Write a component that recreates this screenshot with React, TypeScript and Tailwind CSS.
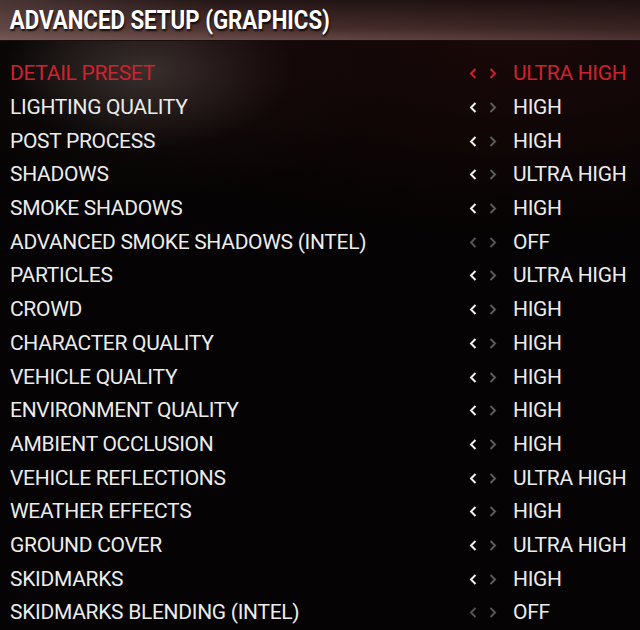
import React from 'react'

type Row = {
  label: string
  value: string
  active?: boolean
  disabled?: boolean
}

const rows: Row[] = [
  { label: 'DETAIL PRESET', value: 'ULTRA HIGH', active: true },
  { label: 'LIGHTING QUALITY', value: 'HIGH' },
  { label: 'POST PROCESS', value: 'HIGH' },
  { label: 'SHADOWS', value: 'ULTRA HIGH' },
  { label: 'SMOKE SHADOWS', value: 'HIGH' },
  { label: 'ADVANCED SMOKE SHADOWS (INTEL)', value: 'OFF', disabled: true },
  { label: 'PARTICLES', value: 'ULTRA HIGH' },
  { label: 'CROWD', value: 'HIGH' },
  { label: 'CHARACTER QUALITY', value: 'HIGH' },
  { label: 'VEHICLE QUALITY', value: 'HIGH' },
  { label: 'ENVIRONMENT QUALITY', value: 'HIGH' },
  { label: 'AMBIENT OCCLUSION', value: 'HIGH' },
  { label: 'VEHICLE REFLECTIONS', value: 'ULTRA HIGH' },
  { label: 'WEATHER EFFECTS', value: 'HIGH' },
  { label: 'GROUND COVER', value: 'ULTRA HIGH' },
  { label: 'SKIDMARKS', value: 'HIGH' },
  { label: 'SKIDMARKS BLENDING (INTEL)', value: 'OFF', disabled: true },
]

function Chevron({ dir, className }: { dir: 'left' | 'right'; className: string }) {
  return (
    <svg width="8" height="11" viewBox="0 0 8 11" className={className}>
      {dir === 'left' ? (
        <path d="M6.5 1 L2 5.5 L6.5 10" fill="none" stroke="currentColor" strokeWidth="2" />
      ) : (
        <path d="M1.5 1 L6 5.5 L1.5 10" fill="none" stroke="currentColor" strokeWidth="2" />
      )}
    </svg>
  )
}

function SettingRow({ row }: { row: Row }) {
  const text = row.active ? 'text-[#d0222c]' : 'text-[#ececec]'
  let left = 'text-[#f2f2f2]'
  let right = 'text-[#5c5c5c]'
  if (row.active) {
    left = 'text-[#d0222c]'
    right = 'text-[#d0222c]'
  }
  if (row.disabled) {
    left = 'text-[#555555]'
    right = 'text-[#555555]'
  }

  return (
    <div className={`flex h-[33.7px] items-center ${text}`}>
      <div className="flex-1 pl-[10px] whitespace-nowrap">{row.label}</div>
      <div className="flex w-[170px] items-center">
        <Chevron dir="left" className={`-ml-[1px] ${left}`} />
        <Chevron dir="right" className={`ml-[12px] ${right}`} />
        <span className="ml-[16px] whitespace-nowrap">{row.value}</span>
      </div>
    </div>
  )
}

export default function App() {
  return (
    <div className="relative h-[630px] w-[640px] overflow-hidden bg-[#050303] font-['Roboto',sans-serif]">
      <div className="pointer-events-none absolute inset-0 bg-[radial-gradient(ellipse_240px_130px_at_150px_70px,rgba(74,66,62,0.8),rgba(20,12,12,0.4)_60%,transparent_100%)]" />
      <div className="pointer-events-none absolute inset-0 bg-[radial-gradient(ellipse_500px_200px_at_520px_40px,rgba(40,12,12,0.6),transparent_100%)]" />

      <div className="relative h-[41px] border-b border-[#1a0e0e] bg-[linear-gradient(to_bottom,#231515,#4a302e_70%,#6a4c4a)]">
        <div className="absolute inset-0 bg-[linear-gradient(to_right,rgba(140,110,106,0.35),transparent_35%,rgba(20,8,8,0.35))]" />
        <h1 className="relative origin-left scale-x-[0.89] pl-[11px] pt-[6px] text-[25px] font-bold leading-[30px] whitespace-nowrap text-white [text-shadow:1px_2px_2px_rgba(0,0,0,0.8)]">
          ADVANCED SETUP (GRAPHICS)
        </h1>
      </div>

      <div className="relative pt-[16px] text-[21px] leading-none tracking-[-0.3px]">
        {rows.map((row) => (
          <SettingRow key={row.label} row={row} />
        ))}
      </div>
    </div>
  )
}
